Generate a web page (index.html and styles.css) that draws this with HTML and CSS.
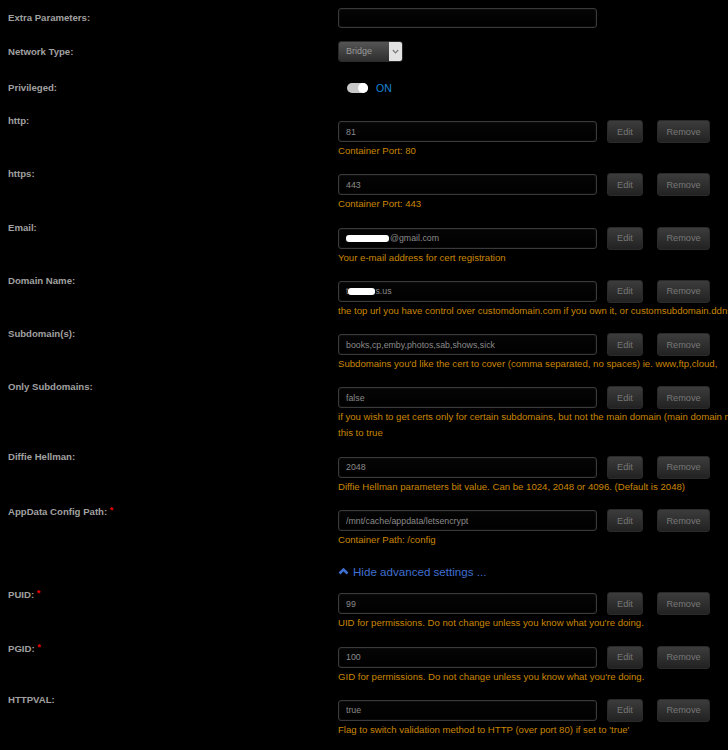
FILE: index.html
```html
<!DOCTYPE html>
<html lang="en">
<head>
    <meta charset="UTF-8">
    <meta name="viewport" content="width=device-width, initial-scale=1.0">
    <title>Container Settings</title>
    <link rel="stylesheet" href="styles.css">
</head>
<body>
    <div class="container">
        <div class="row simple first">
            <label class="name">Extra Parameters:</label>
            <input type="text" class="text-input" value="">
        </div>

        <div class="row simple network">
            <label class="name">Network Type:</label>
            <div class="select">
                <span class="select-value">Bridge</span>
                <span class="select-arrow">
                    <svg width="7" height="5" viewBox="0 0 7 5"><polyline points="0.8,1 3.5,3.8 6.2,1" fill="none" stroke="#777" stroke-width="1.2"/></svg>
                </span>
            </div>
        </div>

        <div class="row simple privileged">
            <label class="name">Privileged:</label>
            <span class="toggle"><span class="knob"></span></span>
            <span class="toggle-text">ON</span>
        </div>

        <div class="row">
            <label class="name">http:</label>
            <div class="field">
                <div class="line">
                    <input type="text" class="text-input" value="81">
                    <button class="btn edit">Edit</button>
                    <button class="btn remove">Remove</button>
                </div>
                <div class="help">Container Port: 80</div>
            </div>
        </div>

        <div class="row">
            <label class="name">https:</label>
            <div class="field">
                <div class="line">
                    <input type="text" class="text-input" value="443">
                    <button class="btn edit">Edit</button>
                    <button class="btn remove">Remove</button>
                </div>
                <div class="help">Container Port: 443</div>
            </div>
        </div>

        <div class="row">
            <label class="name">Email:</label>
            <div class="field">
                <div class="line">
                    <div class="text-input fake"><span class="blot email-blot"></span>@gmail.com</div>
                    <button class="btn edit">Edit</button>
                    <button class="btn remove">Remove</button>
                </div>
                <div class="help">Your e-mail address for cert registration</div>
            </div>
        </div>

        <div class="row">
            <label class="name">Domain Name:</label>
            <div class="field">
                <div class="line">
                    <div class="text-input fake">t<span class="blot domain-blot"></span>s.us</div>
                    <button class="btn edit">Edit</button>
                    <button class="btn remove">Remove</button>
                </div>
                <div class="help">the top url you have control over customdomain.com if you own it, or customsubdomain.ddnsprovider.com if you use a dynamic dns service</div>
            </div>
        </div>

        <div class="row">
            <label class="name">Subdomain(s):</label>
            <div class="field">
                <div class="line">
                    <input type="text" class="text-input" value="books,cp,emby,photos,sab,shows,sick">
                    <button class="btn edit">Edit</button>
                    <button class="btn remove">Remove</button>
                </div>
                <div class="help">Subdomains you'd like the cert to cover (comma separated, no spaces) ie. www,ftp,cloud,</div>
            </div>
        </div>

        <div class="row">
            <label class="name">Only Subdomains:</label>
            <div class="field">
                <div class="line">
                    <input type="text" class="text-input" value="false">
                    <button class="btn edit">Edit</button>
                    <button class="btn remove">Remove</button>
                </div>
                <div class="help">if you wish to get certs only for certain subdomains, but not the main domain (main domain may be hosted on another machine) set<br>this to true</div>
            </div>
        </div>

        <div class="row">
            <label class="name">Diffie Hellman:</label>
            <div class="field">
                <div class="line">
                    <input type="text" class="text-input" value="2048">
                    <button class="btn edit">Edit</button>
                    <button class="btn remove">Remove</button>
                </div>
                <div class="help">Diffie Hellman parameters bit value. Can be 1024, 2048 or 4096. (Default is 2048)</div>
            </div>
        </div>

        <div class="row">
            <label class="name">AppData Config Path: <span class="req">*</span></label>
            <div class="field">
                <div class="line">
                    <input type="text" class="text-input" value="/mnt/cache/appdata/letsencrypt">
                    <button class="btn edit">Edit</button>
                    <button class="btn remove">Remove</button>
                </div>
                <div class="help">Container Path: /config</div>
            </div>
        </div>

        <div class="advanced">
            <svg width="11" height="8" viewBox="0 0 11 8"><polyline points="1.5,6.5 5.5,2.5 9.5,6.5" fill="none" stroke="#3f6fd0" stroke-width="2.6"/></svg>
            <span>Hide advanced settings ...</span>
        </div>

        <div class="row">
            <label class="name">PUID: <span class="req">*</span></label>
            <div class="field">
                <div class="line">
                    <input type="text" class="text-input" value="99">
                    <button class="btn edit">Edit</button>
                    <button class="btn remove">Remove</button>
                </div>
                <div class="help">UID for permissions. Do not change unless you know what you're doing.</div>
            </div>
        </div>

        <div class="row">
            <label class="name">PGID: <span class="req">*</span></label>
            <div class="field">
                <div class="line">
                    <input type="text" class="text-input" value="100">
                    <button class="btn edit">Edit</button>
                    <button class="btn remove">Remove</button>
                </div>
                <div class="help">GID for permissions. Do not change unless you know what you're doing.</div>
            </div>
        </div>

        <div class="row">
            <label class="name">HTTPVAL:</label>
            <div class="field">
                <div class="line">
                    <input type="text" class="text-input" value="true">
                    <button class="btn edit">Edit</button>
                    <button class="btn remove">Remove</button>
                </div>
                <div class="help">Flag to switch validation method to HTTP (over port 80) if set to 'true'</div>
            </div>
        </div>
    </div>
</body>
</html>
```

FILE: styles.css
```css
html, body {
    overflow: hidden;
}
body {
    margin: 0;
    background: #000;
    font-family: "Liberation Sans", Arial, sans-serif;
    color: #999;
}
.container {
    padding: 8px 0 0 8px;
}
.row {
    display: flex;
    margin-bottom: 8.3px;
}
.name {
    flex: 0 0 330px;
    font-size: 9.6px;
    font-weight: bold;
    line-height: 14px;
    color: #a0a0a0;
    white-space: nowrap;
}
.req {
    color: #e00;
    font-size: 9px;
    vertical-align: 2px;
}
.row.simple {
    align-items: center;
}
.row.first {
    height: 20px;
    margin-bottom: 13px;
}
.row.network {
    height: 21px;
    margin-bottom: 15px;
}
.row.privileged {
    height: 21px;
    margin-bottom: 16px;
}
.field {
    padding-top: 6px;
}
.line {
    display: flex;
    align-items: center;
    height: 23px;
}
.text-input {
    box-sizing: border-box;
    width: 259px;
    height: 21px;
    margin: 0;
    padding: 0 0 0 7px;
    background: linear-gradient(#050505, #000);
    border: 1px solid #3a3a3a;
    border-radius: 3px;
    box-shadow: inset 0 0 2px #222;
    font-family: "Liberation Sans", Arial, sans-serif;
    font-size: 8.8px;
    color: #8a8a8a;
    outline: none;
}
.row.first .text-input {
    height: 20px;
}
.text-input.fake {
    display: flex;
    align-items: center;
}
.blot {
    display: inline-block;
    background: #fff;
    border-radius: 3px;
}
.email-blot {
    width: 43px;
    height: 7px;
    margin-right: 1px;
}
.domain-blot {
    width: 27px;
    height: 7px;
}
.btn {
    box-sizing: border-box;
    height: 23px;
    margin: 0;
    padding: 0;
    background: linear-gradient(#3c3c3c, #222);
    border: 1px solid #2a2a2a;
    border-radius: 3px;
    font-family: "Liberation Sans", Arial, sans-serif;
    font-size: 9.2px;
    color: #777;
}
.edit {
    width: 36px;
    margin-left: 10px;
}
.remove {
    width: 53px;
    margin-left: 14px;
}
.help {
    font-size: 9.6px;
    line-height: 16px;
    color: #c98600;
    white-space: nowrap;
}
.select {
    display: flex;
    width: 65px;
    height: 21px;
    border-radius: 3px;
    overflow: hidden;
    border: 1px solid #2a2a2a;
    box-sizing: border-box;
}
.select-value {
    flex: 1;
    padding-left: 7px;
    line-height: 19px;
    font-size: 9px;
    color: #999;
    background: linear-gradient(#555, #2e2e2e);
}
.select-arrow {
    width: 13px;
    display: flex;
    align-items: center;
    justify-content: center;
    background: #e2e2e2;
}
.toggle {
    position: relative;
    width: 21px;
    height: 10px;
    margin-left: 9px;
    border-radius: 5px;
    background: #c8c8c8;
}
.knob {
    position: absolute;
    right: 0;
    top: 0;
    width: 10px;
    height: 10px;
    border-radius: 50%;
    background: #fff;
}
.toggle-text {
    margin-left: 8px;
    font-size: 10.5px;
    color: #1a84d6;
}
.advanced {
    display: flex;
    align-items: center;
    height: 30px;
    padding-left: 330px;
    font-size: 11.6px;
    color: #3f6fd0;
}
.advanced svg {
    margin-right: 4px;
}
```
